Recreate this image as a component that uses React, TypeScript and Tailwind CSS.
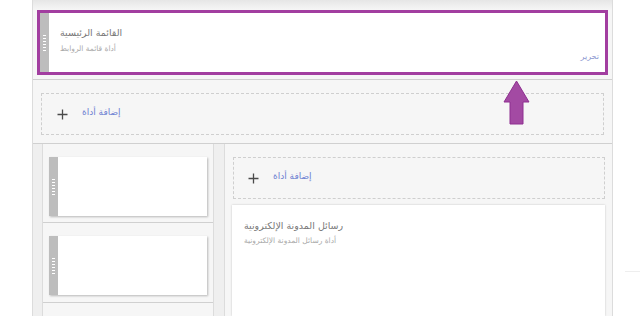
import React from 'react';

const arabic = { fontFamily: '"DejaVu Sans", "Liberation Sans", sans-serif' };

// Gray drag handle with its dotted grip
const Handle = () => (
  <div className="w-[9px] shrink-0 bg-[#bdbdbd] flex flex-col items-center justify-center gap-[2px]">
    {[0, 1, 2, 3, 4, 5].map((i) => (
      <div key={i} className="w-[3px] h-[1px] bg-white" />
    ))}
  </div>
);

const Plus = () => (
  <svg width="11" height="11" viewBox="0 0 11 11" className="shrink-0">
    <path d="M5.5 0.5 V10.5 M0.5 5.5 H10.5" stroke="#4a4a4a" strokeWidth="1.3" />
  </svg>
);

const AddWidget = ({ className }: { className: string }) => (
  <div className={`border border-dashed border-[#cfcfcf] flex items-center ${className}`}>
    <Plus />
    <span dir="rtl" className="ml-[14px] mb-[4px] text-[9px] text-[#6d7fd2] leading-none" style={arabic}>
      إضافة أداة
    </span>
  </div>
);

const EmptyCard = () => (
  <div className="h-[59px] flex bg-white shadow-[1px_1px_2px_rgba(0,0,0,0.25)]">
    <Handle />
    <div className="flex-1" />
  </div>
);

export default function App() {
  return (
    <div className="w-[640px] h-[316px] bg-white overflow-hidden relative">
      <div className="ml-[32px] w-[581px] h-full bg-[#f6f6f6] border-x border-[#dcdcdc] flex flex-col">
        {/* top shade */}
        <div className="h-[10px] bg-gradient-to-b from-[#e6e6e6] to-[#f6f6f6]" />

        {/* selected widget */}
        <div className="mx-[4px] h-[65px] border-[3px] border-[#a23ea0] bg-white flex">
          <Handle />
          <div className="flex-1 flex flex-col items-start pl-[11px] pr-[6px] pt-[15px]">
            <div dir="rtl" className="text-[9.5px] text-[#777] leading-none" style={arabic}>
              القائمة الرئيسية
            </div>
            <div dir="rtl" className="mt-[7px] text-[7.5px] text-[#aaa] leading-none" style={arabic}>
              أداة قائمة الروابط
            </div>
            <div dir="rtl" className="self-end mt-[1px] text-[8px] text-[#8a96cf] leading-none" style={arabic}>
              تحرير
            </div>
          </div>
        </div>

        <div className="h-[4px]" />
        <div className="h-[1px] bg-[#d0d0d0]" />

        <div className="h-[63px] px-[8px] pt-[13px]">
          <AddWidget className="h-[42px] pl-[15px]" />
        </div>

        <div className="h-[1px] bg-[#d0d0d0]" />

        {/* two columns */}
        <div className="flex-1 flex bg-[#efefef] pl-[9px]">
          <div className="w-[172px] bg-[#f6f6f6] border-x border-[#dcdcdc] flex flex-col">
            <div className="h-[79px] px-[6px] pt-[13px] border-b border-[#d0d0d0]">
              <EmptyCard />
            </div>
            <div className="h-[80px] px-[6px] pt-[13px] border-b border-[#d0d0d0]">
              <EmptyCard />
            </div>
          </div>
          <div className="w-[10px]" />
          <div className="flex-1 bg-[#f6f6f6] border-l border-[#dcdcdc] pl-[7px] pr-[7px] pt-[13px] flex flex-col">
            <AddWidget className="h-[42px] ml-[1px] pl-[14px]" />
            <div className="mt-[6px] flex-1 bg-white shadow-[0_0_2px_rgba(0,0,0,0.2)] pl-[12px] pt-[16px] flex flex-col items-start">
              <div dir="rtl" className="text-[9.5px] text-[#777] leading-none" style={arabic}>
                رسائل المدونة الإلكترونية
              </div>
              <div dir="rtl" className="mt-[6px] text-[7.5px] text-[#aaa] leading-none" style={arabic}>
                أداة رسائل المدونة الإلكترونية
              </div>
            </div>
          </div>
        </div>
      </div>

      {/* faint line on the right */}
      <div className="absolute left-[625px] top-[271px] w-[15px] h-[1px] bg-[#eeeeee]" />

      {/* pointing arrow */}
      <svg className="absolute left-[502px] top-[79px]" width="29" height="47" viewBox="0 0 29 47">
        <path
          d="M14.5 2 L27 23 L21 23 L21 45 L8 45 L8 23 L2 23 Z"
          fill="#a34aa3"
          stroke="#8e2f90"
          strokeWidth="1"
          strokeLinejoin="miter"
        />
      </svg>
    </div>
  );
}
